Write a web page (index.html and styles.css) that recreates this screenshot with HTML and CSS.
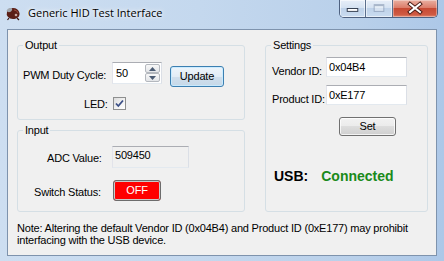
FILE: index.html
```html
<!DOCTYPE html>
<html>
<head>
<meta charset="utf-8">
<title>Generic HID Test Interface</title>
<link rel="stylesheet" href="styles.css">
</head>
<body>
<div class="window">
  <div class="titlebar">
    <svg class="appicon" width="16" height="16" viewBox="0 0 16 16">
      <path d="M2 7 Q3 3 8 3 Q13 3 14.5 8 Q15 12 11 13.5 Q6 15 3 12 Q1 10 2 7Z" fill="#5b1f17"/>
      <path d="M1.5 6 Q2.5 2.5 6.5 3 Q8 4.5 6 6.5 Q3.5 8 1.5 6Z" fill="#a3a8ae"/>
      <path d="M9 5 Q12 5 13 8" stroke="#9c4a3c" stroke-width="1" fill="none"/>
      <circle cx="11" cy="10" r="1.3" fill="#c9a8a0"/>
      <path d="M4 13 L2.5 15 M12 13 L14 15" stroke="#3a1410" stroke-width="1.2"/>
    </svg>
    <span class="title">Generic HID Test Interface</span>
    <div class="caps">
      <div class="cap cap-min">
        <svg width="26" height="17" viewBox="0 0 26 17"><rect x="7.5" y="8.5" width="11" height="3" fill="#fff" stroke="#323c4e"/></svg>
      </div>
      <div class="cap cap-max">
        <svg width="27" height="17" viewBox="0 0 27 17"><rect x="8.5" y="4.5" width="10" height="7" fill="rgba(255,255,255,0.35)" stroke="rgba(110,130,160,0.55)"/><line x1="9" y1="5.5" x2="18" y2="5.5" stroke="rgba(110,130,160,0.55)"/></svg>
      </div>
      <div class="cap cap-close">
        <svg width="44" height="17" viewBox="0 0 44 17">
          <path d="M17 4 L27 12 M27 4 L17 12" stroke="#4a1c16" stroke-width="4" stroke-linecap="square"/>
          <path d="M17 4 L27 12 M27 4 L17 12" stroke="#fff" stroke-width="2" stroke-linecap="square"/>
        </svg>
      </div>
    </div>
  </div>
  <div class="client">
    <div class="groups">
      <div class="leftcol">
        <fieldset class="group output">
          <legend>Output</legend>
          <div class="row row-pwm">
            <span class="lbl lbl-pwm">PWM Duty Cycle:</span>
            <div class="numeric">
              <span class="val">50</span>
              <div class="spin">
                <span class="spinbtn"><svg width="7" height="4" viewBox="0 0 7 4"><path d="M0 4 L3.5 0 L7 4Z" fill="#4b5b73"/></svg></span>
                <span class="spinbtn"><svg width="7" height="4" viewBox="0 0 7 4"><path d="M0 0 L3.5 4 L7 0Z" fill="#4b5b73"/></svg></span>
              </div>
            </div>
            <button class="btn btn-default btn-update">Update</button>
          </div>
          <div class="row row-led">
            <span class="lbl lbl-led">LED:</span>
            <span class="check"><svg width="11" height="11" viewBox="0 0 11 11"><path d="M2 5.5 L4.3 8 L9 2.5" stroke="#3b4f86" stroke-width="1.8" fill="none"/></svg></span>
          </div>
        </fieldset>
        <fieldset class="group input">
          <legend>Input</legend>
          <div class="row row-adc">
            <span class="lbl lbl-adc">ADC Value:</span>
            <div class="tb tb-readonly tb-adc">509450</div>
          </div>
          <div class="row row-switch">
            <span class="lbl lbl-switch">Switch Status:</span>
            <div class="state-off">OFF</div>
          </div>
        </fieldset>
      </div>
      <fieldset class="group settings">
        <legend>Settings</legend>
        <div class="row row-vendor">
          <span class="lbl lbl-id">Vendor ID:</span>
          <div class="tb tb-id">0x04B4</div>
        </div>
        <div class="row row-product">
          <span class="lbl lbl-id">Product ID:</span>
          <div class="tb tb-id">0xE177</div>
        </div>
        <button class="btn btn-set">Set</button>
        <div class="row row-usb">
          <span class="usb-label">USB:</span>
          <span class="usb-status">Connected</span>
        </div>
      </fieldset>
    </div>
    <p class="note">Note: Altering the default Vendor ID (0x04B4) and Product ID (0xE177) may prohibit interfacing with the USB device.</p>
  </div>
</div>
</body>
</html>
```

FILE: styles.css
```css
* { box-sizing: border-box; }
html, body {
  margin: 0;
  width: 444px;
  height: 261px;
  overflow: hidden;
}
body {
  font-family: "Liberation Sans", Arial, sans-serif;
  font-size: 11px;
  letter-spacing: -0.2px;
  color: #000;
}
.window {
  width: 444px;
  height: 261px;
  display: flex;
  flex-direction: column;
  background: linear-gradient(to right, #cddef1 0%, #c4d8ee 45%, #b9d0ea 80%, #adc8e8 100%);
}
.titlebar {
  height: 29px;
  flex: none;
  display: flex;
  align-items: flex-start;
}
.appicon {
  margin: 5px 0 0 5px;
  flex: none;
}
.title {
  margin: 5px 0 0 7px;
  font-family: "Open Sans", "Noto Sans", sans-serif;
  font-size: 11px;
  line-height: 16px;
  letter-spacing: 0;
  text-shadow: 0 0 6px #fff, 0 0 3px rgba(255,255,255,0.9);
}
.caps {
  margin-left: auto;
  margin-right: 6px;
  display: flex;
  height: 18px;
  border: 1px solid #4e6180;
  border-top: none;
  border-radius: 0 0 5px 5px;
  overflow: hidden;
}
.cap {
  height: 17px;
  display: flex;
}
.cap-min { width: 26px; border-right: 1px solid #5b6f8d; }
.cap-max { width: 27px; border-right: 1px solid #5b6f8d; }
.cap-min, .cap-max {
  background: linear-gradient(#e7eef8 0%, #d6e3f2 45%, #bfd2e9 50%, #cadcf0 100%);
  box-shadow: inset 0 0 0 1px rgba(255,255,255,0.55);
}
.cap-close {
  width: 44px;
  background: linear-gradient(#eab0a2 0%, #dc7d6a 45%, #c74a34 50%, #cf5a42 85%, #e08770 100%);
  box-shadow: inset 0 0 0 1px rgba(255,255,255,0.35);
}

.client {
  flex: 1;
  margin: 0 7px 5px;
  border: 1px solid #7e93ad;
  background: #f0f0f0;
  padding: 9px 8px 0 9px;
  display: flex;
  flex-direction: column;
}
.groups {
  display: grid;
  grid-template-columns: 228px 163px;
  column-gap: 20px;
  align-items: start;
}
.leftcol {
  display: flex;
  flex-direction: column;
  gap: 4px;
}
.group {
  margin: 0;
  padding: 0;
  min-width: 0;
  border: 1px solid #d5dfe5;
  border-radius: 3px;
}
.group legend {
  margin-left: 5px;
  padding: 0 2px;
  line-height: 13px;
}
.output { height: 81px; }
.input { height: 88px; }
.settings { height: 173px; display: flex; flex-direction: column; align-items: flex-start; }

.row {
  display: flex;
  align-items: flex-start;
}
.lbl {
  line-height: 13px;
  white-space: nowrap;
  flex: none;
}

/* Output */
.row-pwm { margin-top: 10px; }
.lbl-pwm { margin: 7px 0 0 5px; width: 89px; }
.numeric {
  width: 50px;
  height: 22px;
  display: flex;
  background: #fff;
  border: 1px solid;
  border-color: #abadb3 #dbdfe6 #e3e9ef #e2e3ea;
}
.numeric .val {
  flex: 1;
  padding: 4px 0 0 3px;
  line-height: 13px;
}
.spin {
  width: 16px;
  display: flex;
  flex-direction: column;
  padding: 1px 1px 1px 0;
}
.spinbtn {
  flex: 1;
  display: flex;
  align-items: center;
  justify-content: center;
  border: 1px solid #b4b8be;
  border-radius: 2px;
  background: linear-gradient(#f8f8f8, #e3e5e8);
}
.btn {
  font-family: inherit;
  font-size: 11px;
  letter-spacing: -0.2px;
  color: #000;
  padding: 0;
  line-height: 13px;
  border: 1px solid #707070;
  border-radius: 3px;
  background: linear-gradient(#f2f2f2 0%, #ebebeb 50%, #dddddd 50%, #cfcfcf 100%);
  box-shadow: inset 0 0 0 1px rgba(255,255,255,0.75);
}
.btn-default {
  border-color: #3c7fb1;
  background: linear-gradient(#eef5fb 0%, #e2ecf5 50%, #d0dfec 50%, #c6d8e8 100%);
  box-shadow: inset 0 0 0 1px rgba(200,235,255,0.9);
}
.btn-update {
  margin: 4px 0 0 8px;
  width: 54px;
  height: 21px;
}
.row-led { margin-top: 10px; }
.lbl-led { margin: 1px 0 0 66px; width: 29px; }
.check {
  width: 13px;
  height: 13px;
  display: flex;
  align-items: center;
  justify-content: center;
  border: 1px solid #8e8f8f;
  background: linear-gradient(135deg, #dcdcdc 0%, #f4f4f4 60%, #ffffff 100%);
}

/* Input */
.tb {
  border: 1px solid;
  border-color: #abadb3 #dbdfe6 #e3e9ef #e2e3ea;
  background: #fff;
  line-height: 13px;
}
.tb-readonly { background: #f0f0f0; }
.row-adc { margin-top: 9px; }
.lbl-adc { margin: 6px 0 0 29px; width: 65px; }
.tb-adc {
  width: 77px;
  height: 22px;
  padding: 2px 0 0 2px;
}
.row-switch { margin-top: 12px; }
.lbl-switch { margin: 6px 0 0 16px; width: 79px; }
.state-off {
  width: 48px;
  height: 21px;
  border: 1px solid #6c6c6c;
  border-radius: 3px;
  background: #ff0000;
  box-shadow: inset 0 0 0 1px #c9c9c9;
  color: #fff;
  text-align: center;
  line-height: 19px;
}

/* Settings */
.row-vendor { margin-top: 5px; }
.row-product { margin-top: 7px; }
.lbl-id { margin: 8px 0 0 6px; width: 54px; }
.tb-id {
  width: 81px;
  height: 20px;
  padding: 3px 0 0 2px;
}
.btn-set {
  margin: 11px 0 0 73px;
  width: 57px;
  height: 19px;
}
.row-usb {
  margin-top: 32px;
  font-size: 14px;
  font-weight: bold;
  letter-spacing: 0;
  line-height: 17px;
}
.usb-label { margin-left: 8px; }
.usb-status { margin-left: 13px; color: #1a8a1a; }

.note {
  margin: 10px 0 0;
  line-height: 12px;
}
```
